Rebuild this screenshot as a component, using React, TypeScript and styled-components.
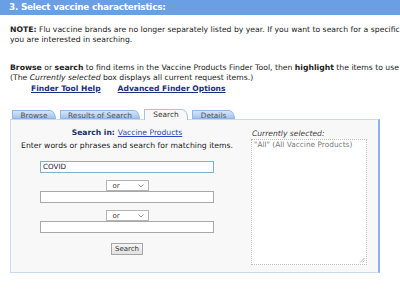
import React from 'react'
import styled, { createGlobalStyle } from 'styled-components'

const GlobalStyle = createGlobalStyle`
  body {
    margin: 0;
    background: #ffffff;
    font-family: "DejaVu Sans", Verdana, sans-serif;
    color: #222;
  }
`

const Page = styled.div`
  width: 400px;
  height: 290px;
  overflow: hidden;
`

const Header = styled.div`
  height: 15px;
  background: #6b9fe4;
  color: #fff;
  font-weight: bold;
  font-size: 8.9px;
  letter-spacing: -0.25px;
  line-height: 15px;
  padding-left: 9px;
  white-space: nowrap;
`

const Body = styled.div`
  padding: 10px 0 0 10px;
  font-size: 7.7px;
  line-height: 10px;
`

const Para = styled.p<{ gap?: number }>`
  margin: 0 0 ${p => p.gap ?? 0}px 0;
  white-space: nowrap;
`

const Links = styled.div`
  display: flex;
  gap: 17px;
  padding-left: 21px;
  margin-top: 1px;
`

const NavLink = styled.a`
  color: #1c2f7a;
  font-weight: bold;
  text-decoration: underline;
  font-size: 7.6px;
`

const TabStrip = styled.div`
  display: flex;
  align-items: flex-end;
  gap: 4px;
  margin-top: 15px;
  padding-left: 2px;
  height: 10px;
  position: relative;
  z-index: 1;
`

const Tab = styled.div<{ active?: boolean; w: number }>`
  width: ${p => p.w}px;
  height: ${p => (p.active ? 11 : 9)}px;
  box-sizing: border-box;
  border: 1px solid ${p => (p.active ? '#a9c2e2' : '#94b6e6')};
  border-bottom: ${p => (p.active ? 'none' : '1px solid #94b6e6')};
  border-top-right-radius: 6px 9px;
  background: ${p =>
    p.active ? '#f8f8f8' : 'linear-gradient(#d6e6f9, #a2c4f0)'};
  color: ${p => (p.active ? '#333' : '#555')};
  font-size: 7.4px;
  line-height: 9px;
  text-align: center;
  margin-bottom: ${p => (p.active ? -1 : 0)}px;
`

const Panel = styled.div`
  width: 370px;
  height: 154px;
  box-sizing: border-box;
  background: #f8f8f8;
  border: 1px solid #c9d9ea;
  border-right: 2px solid #86b1ec;
  display: flex;
`

const SearchCol = styled.div`
  width: 232px;
  display: flex;
  flex-direction: column;
  align-items: center;
  padding-top: 8px;
`

const SearchIn = styled.div`
  font-size: 7.6px;
  line-height: 10px;
  b {
    color: #1c2f6a;
    margin-right: 3px;
  }
  a {
    color: #2a46c0;
    text-decoration: underline;
  }
`

const Hint = styled.div`
  margin-top: 3px;
  white-space: nowrap;
`

const TextBox = styled.div<{ focused?: boolean }>`
  width: 174px;
  height: 12px;
  box-sizing: border-box;
  background: #fff;
  border: 1px solid ${p => (p.focused ? '#7db3c6' : '#a8a8a8')};
  font-size: 7.2px;
  line-height: 10px;
  padding-left: 2px;
`

const Select = styled.div<{ top: number }>`
  width: 43px;
  height: 11px;
  box-sizing: border-box;
  margin-top: ${p => p.top}px;
  background: #fff;
  border: 1px solid #b4b4b4;
  display: flex;
  align-items: center;
  justify-content: space-between;
  padding: 0 4px 0 6px;
  font-size: 7px;
  color: #444;
  svg {
    display: block;
  }
`

const Button = styled.div`
  margin-top: 10px;
  height: 10px;
  padding: 0 3px;
  background: linear-gradient(#f6f6f6, #e2e2e2);
  border: 1px solid #a6a6a6;
  font-size: 7px;
  line-height: 10px;
  color: #333;
`

const SelectedCol = styled.div`
  padding: 9px 0 0 8px;
  display: flex;
  flex-direction: column;
`

const SelLabel = styled.div`
  font-style: italic;
  color: #444;
  font-size: 7.6px;
  line-height: 10px;
  padding-left: 1px;
`

const SelBox = styled.div`
  position: relative;
  width: 116px;
  height: 126px;
  box-sizing: border-box;
  background: #fff;
  border: 1px dotted #bdbdbd;
  color: #7a7a7a;
  font-size: 7.4px;
  line-height: 10px;
  padding-left: 2px;
  white-space: nowrap;
`

const Grip = styled.svg`
  position: absolute;
  right: 1px;
  bottom: 1px;
`

const Chevron = () => (
  <svg width="6" height="4" viewBox="0 0 6 4">
    <path d="M0.5 0.5 L3 3 L5.5 0.5" fill="none" stroke="#777" strokeWidth="0.8" />
  </svg>
)

const App = () => {
  return (
    <Page>
      <GlobalStyle />
      <Header>3. Select vaccine characteristics:</Header>
      <Body>
        <Para>
          <b>NOTE:</b> Flu vaccine brands are no longer separately listed by year. If you want to search for a specific
        </Para>
        <Para gap={18}>you are interested in searching.</Para>
        <Para>
          <b>Browse</b> or <b>search</b> to find items in the Vaccine Products Finder Tool, then <b>highlight</b> the items to use
        </Para>
        <Para>
          (The <i>Currently selected</i> box displays all current request items.)
        </Para>
        <Links>
          <NavLink>Finder Tool Help</NavLink>
          <NavLink>Advanced Finder Options</NavLink>
        </Links>
        <TabStrip>
          <Tab w={44}>Browse</Tab>
          <Tab w={80}>Results of Search</Tab>
          <Tab w={44} active>Search</Tab>
          <Tab w={43}>Details</Tab>
        </TabStrip>
        <Panel>
          <SearchCol>
            <SearchIn>
              <b>Search in:</b>
              <a>Vaccine Products</a>
            </SearchIn>
            <Hint>Enter words or phrases and search for matching items.</Hint>
            <div style={{ height: 10 }} />
            <TextBox focused>COVID</TextBox>
            <Select top={7}>
              or <Chevron />
            </Select>
            <TextBox />
            <Select top={7}>
              or <Chevron />
            </Select>
            <TextBox />
            <Button>Search</Button>
          </SearchCol>
          <SelectedCol>
            <SelLabel>Currently selected:</SelLabel>
            <SelBox>
              "All" (All Vaccine Products)
              <Grip width="6" height="6" viewBox="0 0 6 6">
                <path d="M5.5 1 L1 5.5 M5.5 3.5 L3.5 5.5" stroke="#999" strokeWidth="0.7" />
              </Grip>
            </SelBox>
          </SelectedCol>
        </Panel>
      </Body>
    </Page>
  )
}

export default App
